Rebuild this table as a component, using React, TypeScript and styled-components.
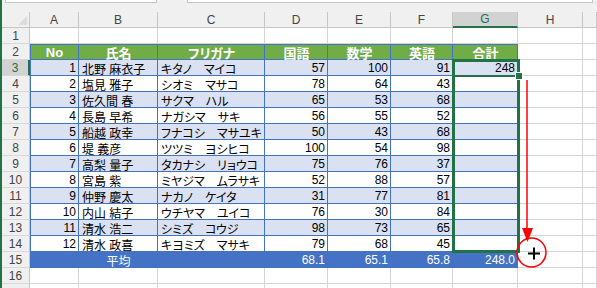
import styled, { createGlobalStyle } from "styled-components";

const GlobalStyle = createGlobalStyle`
  html, body {
    margin: 0;
    padding: 0;
    background: #ffffff;
    overflow: hidden;
  }
  body {
    font-family: "Liberation Sans", "Noto Sans CJK JP", sans-serif;
  }
`;

const GREEN = "#217346";
const BLUE = "#4472c4";
const BAND = "#d9e1f2";
const GRID = "#d4d4d4";

const LETTERS = ["A", "B", "C", "D", "E", "F", "G", "H", ""];

type Student = [number, string, string, number, number, number];

const students: Student[] = [
  [1, "北野 麻衣子", "キタノ　マイコ", 57, 100, 91],
  [2, "塩見 雅子", "シオミ　マサコ", 78, 64, 43],
  [3, "佐久間 春", "サクマ　ハル", 65, 53, 68],
  [4, "長島 早希", "ナガシマ　サキ", 56, 55, 52],
  [5, "船越 政幸", "フナコシ　マサユキ", 50, 43, 68],
  [6, "堤 義彦", "ツツミ　ヨシヒコ", 100, 54, 98],
  [7, "高梨 量子", "タカナシ　リョウコ", 75, 76, 37],
  [8, "宮島 紫", "ミヤジマ　ムラサキ", 52, 88, 57],
  [9, "仲野 慶太", "ナカノ　ケイタ", 31, 77, 81],
  [10, "内山 結子", "ウチヤマ　ユイコ", 76, 30, 84],
  [11, "清水 浩二", "シミズ　コウジ", 98, 73, 65],
  [12, "清水 政喜", "キヨミズ　マサキ", 79, 68, 45],
];

const headers = ["No", "氏名", "フリガナ", "国語", "数学", "英語", "合計"];
const averages = ["", "平均", "", "68.1", "65.1", "65.8", "248.0"];

const Page = styled.div`
  position: relative;
  width: 597px;
  height: 288px;
  overflow: hidden;
  border-left: 2px solid ${GREEN};
  box-sizing: border-box;
  background: #f0f0f0;
`;

const FormulaBar = styled.div`
  height: 12px;
  display: flex;
  align-items: flex-start;
  background: #f0f0f0;
`;

const NameBox = styled.div`
  margin-left: 3px;
  width: 152px;
  height: 3px;
  background: #ffffff;
  border: 1px solid #c6c6c6;
  border-top: none;
  box-sizing: border-box;
`;

const FormulaBox = styled.div`
  margin-left: 30px;
  width: 406px;
  height: 3px;
  background: #ffffff;
  border: 1px solid #c6c6c6;
  border-top: none;
  box-sizing: border-box;
`;

const Sheet = styled.div`
  display: grid;
  grid-template-columns: 28px 49px 79px 107px 63px 63px 62px 65px 65px 1fr;
  grid-auto-rows: 16px;
  background: #ffffff;
`;

const Corner = styled.div`
  background: #f0f0f0;
  border-right: 1px solid #c6c6c6;
  border-bottom: 1px solid #c6c6c6;
  box-sizing: border-box;
  position: relative;
  &::after {
    content: "";
    position: absolute;
    right: 2px;
    bottom: 2px;
    border-style: solid;
    border-width: 0 0 9px 9px;
    border-color: transparent transparent #dcdcdc transparent;
  }
`;

const ColHead = styled.div<{ $active?: boolean }>`
  display: flex;
  align-items: center;
  justify-content: center;
  font-size: 12px;
  color: ${(p) => (p.$active ? GREEN : "#444444")};
  background: ${(p) => (p.$active ? "#d2d2d2" : "#f0f0f0")};
  border-right: 1px solid #c6c6c6;
  border-bottom: ${(p) => (p.$active ? `2px solid ${GREEN}` : "1px solid #c6c6c6")};
  box-sizing: border-box;
`;

const RowHead = styled.div<{ $active?: boolean }>`
  display: flex;
  align-items: center;
  justify-content: center;
  font-size: 12px;
  color: ${(p) => (p.$active ? GREEN : "#444444")};
  background: ${(p) => (p.$active ? "#d2d2d2" : "#f0f0f0")};
  border-right: ${(p) => (p.$active ? `2px solid ${GREEN}` : "1px solid #c6c6c6")};
  border-bottom: 1px solid #d8d8d8;
  box-sizing: border-box;
`;

const Cell = styled.div<{
  $bg?: string;
  $line?: string;
  $align?: "left" | "right" | "center";
  $color?: string;
  $bold?: boolean;
  $top?: boolean;
  $left?: boolean;
}>`
  display: flex;
  align-items: center;
  justify-content: ${(p) =>
    p.$align === "right" ? "flex-end" : p.$align === "center" ? "center" : "flex-start"};
  padding: 1px 2px 0 3px;
  font-size: ${(p) => (p.$bold ? "13px" : "12px")};
  font-weight: ${(p) => (p.$bold ? 700 : 400)};
  font-feature-settings: "palt";
  white-space: nowrap;
  overflow: visible;
  color: ${(p) => p.$color || "#000000"};
  background: ${(p) => p.$bg || "#ffffff"};
  border-right: 1px solid ${(p) => p.$line || GRID};
  border-bottom: 1px solid ${(p) => p.$line || GRID};
  box-shadow: ${(p) =>
    [p.$top ? `inset 0 1px 0 ${BLUE}` : "", p.$left ? `inset 1px 0 0 ${BLUE}` : ""]
      .filter(Boolean)
      .join(", ") || "none"};
  box-sizing: border-box;
`;

const RangeBox = styled.div`
  position: absolute;
  left: 450px;
  top: 59px;
  width: 68px;
  height: 194px;
  border: 3px solid ${GREEN};
  box-sizing: border-box;
  pointer-events: none;
`;

const ActiveEdge = styled.div`
  position: absolute;
  left: 450px;
  top: 75px;
  width: 68px;
  height: 2px;
  background: ${GREEN};
`;

const FillHandle = styled.div`
  position: absolute;
  left: 513px;
  top: 72px;
  width: 6px;
  height: 6px;
  background: ${GREEN};
  border: 1px solid #ffffff;
  box-sizing: content-box;
`;

const DragMark = styled.svg`
  position: absolute;
  left: 513px;
  top: 76px;
  overflow: visible;
`;

type CellSpec = {
  text?: string | number;
  align?: "left" | "right" | "center";
  bg?: string;
  line?: string;
  color?: string;
  bold?: boolean;
  top?: boolean;
  left?: boolean;
};

function cellsForRow(r: number): CellSpec[] {
  const blank: CellSpec[] = [{}, {}];
  if (r === 2) {
    return [
      ...headers.map((h, i) => ({
        text: h,
        align: "center" as const,
        bg: "#70ad47",
        line: BLUE,
        color: "#ffffff",
        bold: true,
        top: true,
        left: i === 0,
      })),
      ...blank,
    ];
  }
  if (r >= 3 && r <= 14) {
    const s = students[r - 3];
    const bg = r % 2 === 1 ? BAND : "#ffffff";
    const base = { bg, line: BLUE };
    return [
      { ...base, text: s[0], align: "right", left: true },
      { ...base, text: s[1], align: "left" },
      { ...base, text: s[2], align: "left" },
      { ...base, text: s[3], align: "right" },
      { ...base, text: s[4], align: "right" },
      { ...base, text: s[5], align: "right" },
      { ...base, text: r === 3 ? 248 : "", align: "right" },
      ...blank,
    ];
  }
  if (r === 15) {
    return [
      ...averages.map((a, i) => ({
        text: a,
        align: (i === 1 ? "center" : "right") as "center" | "right",
        bg: BLUE,
        line: BLUE,
        color: "#ffffff",
      })),
      ...blank,
    ];
  }
  return Array.from({ length: 9 }, () => ({}));
}

const App = () => {
  const rows = Array.from({ length: 17 }, (_, i) => i + 1);
  return (
    <Page>
      <GlobalStyle />
      <FormulaBar>
        <NameBox />
        <FormulaBox />
      </FormulaBar>
      <Sheet>
        <Corner />
        {LETTERS.map((l, i) => (
          <ColHead key={"c" + i} $active={l === "G"}>
            {l}
          </ColHead>
        ))}
        {rows.map((r) => (
          <>
            <RowHead key={"r" + r} $active={r === 3}>
              {r <= 16 ? r : ""}
            </RowHead>
            {cellsForRow(r).map((c, i) => (
              <Cell
                key={r + "-" + i}
                $bg={c.bg}
                $line={c.line}
                $align={c.align}
                $color={c.color}
                $bold={c.bold}
                $top={c.top}
                $left={c.left}
              >
                {c.text}
              </Cell>
            ))}
          </>
        ))}
      </Sheet>
      <RangeBox />
      <ActiveEdge />
      <FillHandle />
      <DragMark width="40" height="200" viewBox="0 0 40 200">
        <line x1="12" y1="4" x2="12" y2="154" stroke="#ff0000" strokeWidth="1.5" />
        <polygon points="7,152 18,152 12.5,166" fill="#ff0000" />
        <circle cx="16.5" cy="176.5" r="14.5" fill="#ffffff" fillOpacity="0" stroke="#ff0000" strokeWidth="1.5" />
        <line x1="13" y1="177.5" x2="25" y2="177.5" stroke="#000000" strokeWidth="2" />
        <line x1="19" y1="171.5" x2="19" y2="183.5" stroke="#000000" strokeWidth="2" />
      </DragMark>
    </Page>
  );
};

export default App;
